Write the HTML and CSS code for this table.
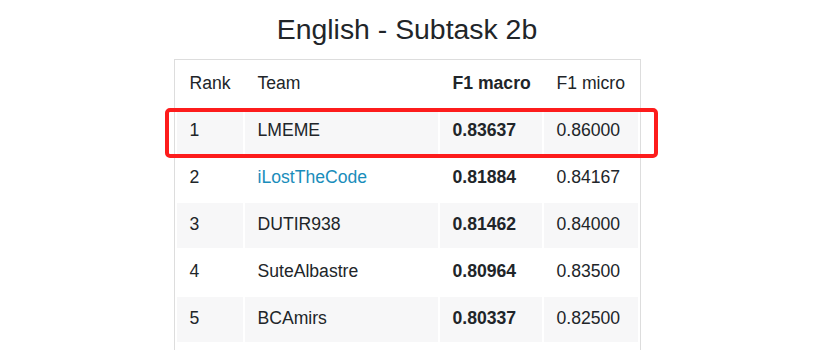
FILE: index.html
```html
<!DOCTYPE html>
<html lang="en">
<head>
<meta charset="utf-8">
<title>English - Subtask 2b</title>
<link rel="stylesheet" href="styles.css">
</head>
<body>
<h3 class="title">English - Subtask 2b</h3>
<div class="board">
  <table class="results">
    <thead>
      <tr>
        <th class="c-rank">Rank</th>
        <th class="c-team">Team</th>
        <th class="c-macro strong">F1 macro</th>
        <th class="c-micro">F1 micro</th>
      </tr>
    </thead>
    <tbody>
      <tr class="stripe">
        <td>1</td><td>LMEME</td><td class="strong">0.83637</td><td>0.86000</td>
      </tr>
      <tr>
        <td>2</td><td><a class="team-link" href="#">iLostTheCode</a></td><td class="strong">0.81884</td><td>0.84167</td>
      </tr>
      <tr class="stripe">
        <td>3</td><td>DUTIR938</td><td class="strong">0.81462</td><td>0.84000</td>
      </tr>
      <tr>
        <td>4</td><td>SuteAlbastre</td><td class="strong">0.80964</td><td>0.83500</td>
      </tr>
      <tr class="stripe">
        <td>5</td><td>BCAmirs</td><td class="strong">0.80337</td><td>0.82500</td>
      </tr>
    </tbody>
  </table>
  <div class="highlight"></div>
</div>
</body>
</html>
```
FILE: styles.css
```css
html, body {
  margin: 0;
  padding: 0;
  background: #ffffff;
}

body {
  font-family: "Liberation Sans", Arial, sans-serif;
  color: #212529;
}

.title {
  margin: 12px 0 13px;
  font-size: 28.4px;
  font-weight: 400;
  line-height: 34px;
  text-align: center;
}

.board {
  position: relative;
  width: 465px;
  margin: 0 auto;
  border: 1px solid #dddddd;
  padding-bottom: 40px;
}

.results {
  width: 465px;
  border-collapse: separate;
  border-spacing: 2px;
  table-layout: fixed;
  font-size: 17.6px;
  line-height: 21px;
}

.results th,
.results td {
  box-sizing: border-box;
  padding: 11px 12px 13px 13px;
  text-align: left;
  font-weight: 400;
  white-space: nowrap;
}

.c-rank { width: 66px; }
.c-team { width: 193px; }
.c-macro { width: 102px; }
.c-micro { width: 94px; }

.results .strong {
  font-weight: 700;
}

.stripe td {
  background: #f7f7f8;
}

.team-link {
  color: #1a8dbb;
  text-decoration: none;
}

.highlight {
  position: absolute;
  left: -10px;
  top: 48px;
  width: 485px;
  height: 42px;
  border: 4px solid #fd1c1c;
  border-radius: 5px;
  pointer-events: none;
}
```
